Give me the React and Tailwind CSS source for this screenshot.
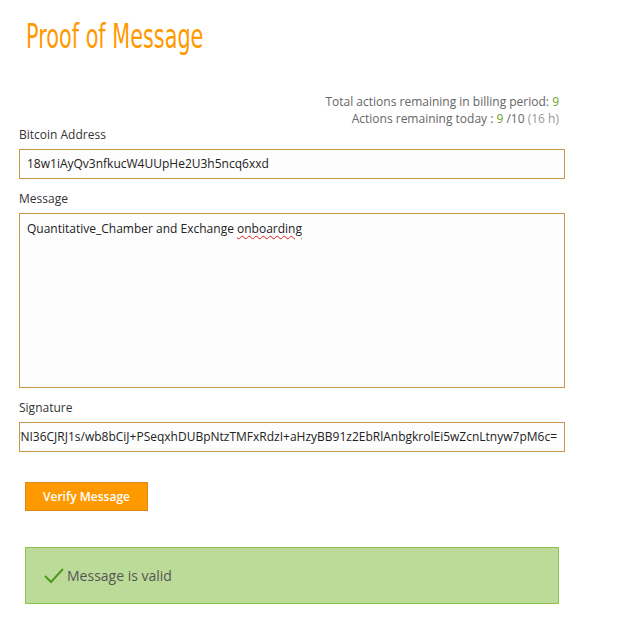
import React from 'react';

const fieldClass = 'w-full h-[30px] border border-[#c8964a] bg-[#fdfdfd] px-[7px] flex items-center text-[12px] text-[#222] overflow-hidden whitespace-nowrap';

const App = () => {
    const signature = 'H4vXm/NI36CJRJ1s/wb8bCiJ+PSeqxhDUBpNtzTMFxRdzI+aHzyBB91z2EbRlAnbgkrolEi5wZcnLtnyw7pM6c=';

    return (
        <div className="w-[640px] h-[629px] bg-white font-['Open_Sans',sans-serif] text-[#333]">
            <div className="pl-[19px] w-[565px]">
                <h1 className="pl-[7px] pt-[17px] text-[33px] leading-[40px] text-[#ff9900] font-['DejaVu_Sans',sans-serif]">
                    <span className="inline-block origin-left scale-x-[0.63]">Proof of Message</span>
                </h1>

                {/* usage counters */}
                <div className="mt-[36px] pr-[6px] text-right text-[12px] leading-[17px] text-[#666]">
                    <div>
                        Total actions remaining in billing period: <span className="text-[#6ca42c]">9</span>
                    </div>
                    <div>
                        Actions remaining today : <span className="text-[#6ca42c]">9</span> /10{' '}
                        <span className="text-[#999]">(16 h)</span>
                    </div>
                </div>

                <label className="block text-[12px] leading-[16px] text-[#333]">Bitcoin Address</label>
                <div className={`mt-[6px] ${fieldClass}`}>18w1iAyQv3nfkucW4UUpHe2U3h5ncq6xxd</div>

                <label className="block mt-[12px] text-[12px] leading-[16px] text-[#333]">Message</label>
                <div className="mt-[6px] w-full h-[175px] border border-[#c8964a] bg-[#fdfdfd] px-[7px] pt-[6px] text-[12px] leading-[17px] text-[#222]">
                    Quantitative_Chamber and Exchange{' '}
                    <span className="underline decoration-wavy decoration-[#e02020] decoration-1 underline-offset-2">onboarding</span>
                </div>

                <label className="block mt-[12px] text-[12px] leading-[16px] text-[#333]">Signature</label>
                <div className={`mt-[6px] justify-end ${fieldClass}`}>{signature}</div>

                <div className="pl-[6px] mt-[30px]">
                    <button
                        type="button"
                        className="w-[123px] h-[29px] bg-[#ff9900] border border-[#e0861a] text-white text-[12px] font-semibold"
                    >
                        Verify Message
                    </button>
                </div>

                <div className="ml-[6px] mt-[36px] w-[534px] h-[57px] bg-[#bcdb98] border border-[#8cc152] flex items-center pl-[17px] text-[14px] text-[#555]">
                    <svg width="22" height="18" viewBox="0 0 22 18" className="mr-[2px]">
                        <path d="M2 9 L8 15 L20 2" fill="none" stroke="#4c9a1c" strokeWidth="2" />
                    </svg>
                    Message is valid
                </div>
            </div>
        </div>
    );
};

export default App;
